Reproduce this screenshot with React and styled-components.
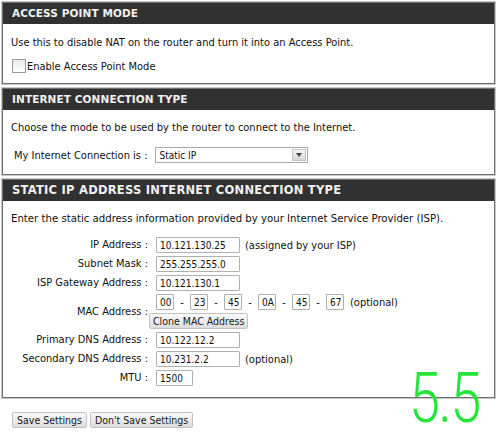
import React from 'react';
import styled, { createGlobalStyle } from 'styled-components';

const GlobalStyle = createGlobalStyle`
  body {
    margin: 0;
    background: #fff;
    font-family: 'DejaVu Sans Condensed', 'Liberation Sans', sans-serif;
    font-size: 11px;
    color: #111;
  }
`;

const Page = styled.div`
  position: relative;
  width: 493px;
  padding: 2px 0 0 2px;
  display: flex;
  flex-direction: column;
  gap: 4px;
`;

const Box = styled.section`
  border: 1px solid #6f6f6f;
  box-shadow: 0 0 0 1px #c8c8c8;
  background: #fff;
`;

const Header = styled.h2`
  margin: 0;
  height: 21px;
  line-height: 21px;
  padding-left: 9px;
  background: #313131;
  color: #f1f1f1;
  font-family: 'DejaVu Sans', Verdana, sans-serif;
  font-size: ${(p) => (p.$big ? 11.5 : 10.5)}px;
  font-weight: bold;
  letter-spacing: ${(p) => (p.$big ? 0.25 : 0.1)}px;
`;

const Body = styled.div`
  padding: ${(p) => p.$pad || '10px 8px 8px'};
  display: flex;
  flex-direction: column;
  gap: ${(p) => p.$gap || '6px'};
`;

const Line = styled.p`
  margin: 0;
  line-height: 16px;
  font-size: ${(p) => p.$size || 11}px;
`;

const CheckRow = styled.label`
  display: flex;
  align-items: center;
  height: 16px;
  padding-left: 1px;
`;

const CheckBox = styled.span`
  width: 12px;
  height: 12px;
  border: 1px solid #9a9a9a;
  background: linear-gradient(#e9e9e9, #fff);
  margin-right: 1px;
`;

const ConnRow = styled.div`
  display: flex;
  align-items: center;
  height: 16px;
  padding-left: 3px;
  gap: 8px;
`;

const Select = styled.div`
  width: 148px;
  height: 14px;
  border: 1px solid #a9a9a9;
  display: flex;
  align-items: center;
  justify-content: space-between;
  font-size: 10px;
  padding-left: 3px;
  box-sizing: content-box;
  background: #fff;
`;

const Arrow = styled.span`
  width: 14px;
  height: 12px;
  margin-right: 1px;
  background: linear-gradient(#f6f6f6, #d7d7d7);
  border: 1px solid #c4c4c4;
  box-sizing: border-box;
  display: flex;
  align-items: center;
  justify-content: center;
  &::after {
    content: '';
    border-left: 3px solid transparent;
    border-right: 3px solid transparent;
    border-top: 4px solid #444;
  }
`;

const Form = styled.div`
  display: grid;
  grid-template-columns: 137px 1fr;
  column-gap: 8px;
  row-gap: 3px;
  margin-top: 4px;
`;

const Label = styled.div`
  text-align: right;
  line-height: 16px;
  align-self: center;
  white-space: nowrap;
  grid-row: ${(p) => p.$span || 'auto'};
`;

const Field = styled.div`
  display: flex;
  align-items: center;
  height: 16px;
  gap: ${(p) => (p.$tight ? 0 : 5)}px;
`;

const Input = styled.input`
  width: ${(p) => p.$w}px;
  height: 16px;
  box-sizing: border-box;
  border: 1px solid #b0b0b0;
  border-radius: 1px;
  padding: 0 0 0 3px;
  font-family: 'DejaVu Sans Condensed', 'Liberation Sans', sans-serif;
  font-size: 10px;
  color: #111;
  background: #fff;
  outline: none;
`;

const Dash = styled.span`
  width: 16px;
  text-align: center;
`;

const Note = styled.span`
  margin-left: ${(p) => p.$gap || 0}px;
`;

const Button = styled.button`
  height: 16px;
  padding: 0 ${(p) => p.$pad || 6}px;
  border: 1px solid #c2c2c2;
  border-radius: 2px;
  background: linear-gradient(#fafafa, #dcdcdc);
  font-family: 'DejaVu Sans Condensed', 'Liberation Sans', sans-serif;
  font-size: 10.5px;
  color: #1a1a1a;
  line-height: 14px;
  cursor: pointer;
`;

const CloneRow = styled.div`
  height: 16px;
  margin-left: -7px;
  display: flex;
  align-items: center;
`;

const Actions = styled.div`
  display: flex;
  gap: 3px;
  padding: 10px 0 0 10px;
`;

const Scribble = styled.div`
  position: absolute;
  left: 409px;
  top: 372px;
  font-family: Roboto, 'Liberation Sans', sans-serif;
  font-weight: 300;
  font-size: 70px;
  line-height: 52px;
  color: #27e43a;
  transform: scaleX(0.8);
  transform-origin: left top;
  letter-spacing: -2px;
`;

const mac = ['00', '23', '45', '0A', '45', '67'];

export default function App() {
  return (
    <>
      <GlobalStyle />
      <Page>
        <Box>
          <Header>ACCESS POINT MODE</Header>
          <Body $pad="11px 8px 9px" $gap="7px">
            <Line>Use this to disable NAT on the router and turn it into an Access Point.</Line>
            <CheckRow>
              <CheckBox />
              Enable Access Point Mode
            </CheckRow>
          </Body>
        </Box>

        <Box>
          <Header>INTERNET CONNECTION TYPE</Header>
          <Body $pad="10px 8px 11px" $gap="11px">
            <Line>Choose the mode to be used by the router to connect to the Internet.</Line>
            <ConnRow>
              My Internet Connection is :
              <Select>
                Static IP
                <Arrow />
              </Select>
            </ConnRow>
          </Body>
        </Box>

        <Box>
          <Header $big>STATIC IP ADDRESS INTERNET CONNECTION TYPE</Header>
          <Body $pad="10px 8px 11px" $gap="6px">
            <Line $size={11.3}>
              Enter the static address information provided by your Internet Service Provider (ISP).
            </Line>
            <Form>
              <Label>IP Address :</Label>
              <Field>
                <Input $w={84} readOnly value="10.121.130.25" />
                (assigned by your ISP)
              </Field>
              <Label>Subnet Mask :</Label>
              <Field>
                <Input $w={84} readOnly value="255.255.255.0" />
              </Field>
              <Label>ISP Gateway Address :</Label>
              <Field>
                <Input $w={84} readOnly value="10.121.130.1" />
              </Field>
              <Label $span="span 2">MAC Address :</Label>
              <Field $tight>
                {mac.map((m, i) => (
                  <React.Fragment key={i}>
                    {i > 0 && <Dash>-</Dash>}
                    <Input $w={18} readOnly value={m} />
                  </React.Fragment>
                ))}
                <Note $gap={6}>(optional)</Note>
              </Field>
              <CloneRow>
                <Button $pad={3}>Clone MAC Address</Button>
              </CloneRow>
              <Label>Primary DNS Address :</Label>
              <Field>
                <Input $w={84} readOnly value="10.122.12.2" />
              </Field>
              <Label>Secondary DNS Address :</Label>
              <Field>
                <Input $w={84} readOnly value="10.231.2.2" />
                (optional)
              </Field>
              <Label>MTU :</Label>
              <Field>
                <Input $w={37} readOnly value="1500" />
              </Field>
            </Form>
          </Body>
        </Box>

        <Actions>
          <Button $pad={4}>Save Settings</Button>
          <Button $pad={4}>Don't Save Settings</Button>
        </Actions>

        <Scribble>5.5</Scribble>
      </Page>
    </>
  );
}
